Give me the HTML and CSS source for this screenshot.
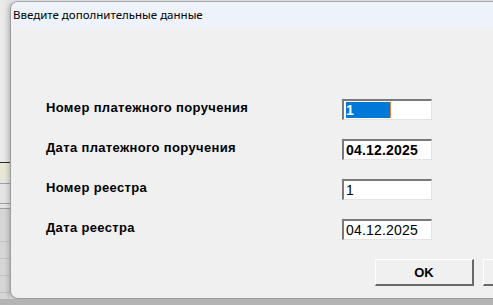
FILE: index.html
```html
<!DOCTYPE html>
<html lang="ru">
<head>
    <meta charset="UTF-8">
    <title>Введите дополнительные данные</title>
    <link rel="stylesheet" href="styles.css">
</head>
<body>
    <div class="screen">
        <div class="desk">
            <div class="behind">
                <div class="behind-top"></div>
                <div class="behind-row selected"></div>
                <div class="behind-row r1"></div>
                <div class="behind-row r2"></div>
                <div class="behind-row r3"></div>
                <div class="behind-grid">
                    <div class="grid-row"></div>
                    <div class="grid-row"></div>
                    <div class="grid-row"></div>
                    <div class="grid-row"></div>
                </div>
            </div>

            <div class="dialog">
                <div class="title-bar">Введите дополнительные данные</div>
                <div class="dialog-body">
                    <div class="form">
                        <label class="label">Номер платежного поручения</label>
                        <div class="field bold"><span class="selection">1</span><span class="caret"></span></div>

                        <label class="label">Дата платежного поручения</label>
                        <div class="field bold">04.12.2025</div>

                        <label class="label">Номер реестра</label>
                        <div class="field">1</div>

                        <label class="label">Дата реестра</label>
                        <div class="field">04.12.2025</div>
                    </div>
                    <div class="buttons">
                        <button class="btn">OK</button>
                        <button class="btn"></button>
                    </div>
                </div>
            </div>
        </div>
        <div class="taskbar"></div>
    </div>
</body>
</html>
```

FILE: styles.css
```css
html, body {
    margin: 0;
    padding: 0;
    overflow: hidden;
}

body {
    background-color: #b4b4b4;
    font-family: "Liberation Sans", Arial, sans-serif;
}

.screen {
    display: flex;
    flex-direction: column;
    width: 493px;
    height: 305px;
    overflow: hidden;
}

.desk {
    display: flex;
    height: 299px;
    background-color: #e6e6e6;
}

/* the application window behind the dialog */
.behind {
    width: 10px;
    flex-shrink: 0;
    display: flex;
    flex-direction: column;
}

.behind-top {
    height: 162px;
    background: linear-gradient(to right, #ececec, #e2e2e2);
}

.behind-row {
    background-color: #e4e4e4;
}

.behind-row.selected {
    height: 16px;
    border-top: 1px solid #2a2a2a;
    background-color: #e8e7d6;
}

.behind-row.r1 {
    height: 4px;
    border-bottom: 1px solid #a0a0a0;
}

.behind-row.r2 {
    height: 19px;
    border-bottom: 1px solid #a0a0a0;
}

.behind-row.r3 {
    height: 4px;
    border-bottom: 1px solid #a0a0a0;
}

.behind-grid {
    flex: 1;
    background-color: #d6d6d6;
    padding-top: 16px;
}

.grid-row {
    height: 16px;
    border-bottom: 1px solid #c4c4c4;
}

.dialog {
    width: 600px;
    flex-shrink: 0;
    margin-top: 1px;
    display: flex;
    flex-direction: column;
    background-color: #f0f0f0;
    border-top: 1px solid #a6a6a6;
    border-left: 1px solid #9c9c9c;
    border-bottom: 1px solid #9c9c9c;
    border-radius: 8px 0 0 8px;
    box-shadow: -2px 1px 4px rgba(0, 0, 0, 0.18);
    overflow: hidden;
}

.title-bar {
    height: 25px;
    line-height: 26px;
    padding-left: 2px;
    background-color: #eef2fa;
    color: #000;
    font-family: "Noto Sans", "Open Sans", sans-serif;
    font-size: 11.5px;
}

.dialog-body {
    flex: 1;
    padding: 72px 0 0 35px;
}

.form {
    display: grid;
    grid-template-columns: 296px 90px;
    grid-auto-rows: 21px;
    row-gap: 19px;
}

.label {
    font-size: 13px;
    font-weight: bold;
    letter-spacing: 0.35px;
    color: #000;
    line-height: 15px;
    margin-top: 1px;
}

.field {
    box-sizing: border-box;
    height: 21px;
    background-color: #fff;
    border-style: solid;
    border-width: 2px 1px 1px 2px;
    border-color: #7a7a7a #e3e3e3 #e3e3e3 #7a7a7a;
    padding: 1px 0 0 2px;
    font-size: 14px;
    line-height: 16px;
    color: #000;
    display: flex;
    align-items: flex-start;
    letter-spacing: 0.2px;
}

.field.bold {
    font-weight: bold;
}

.selection {
    display: inline-block;
    width: 44px;
    height: 16px;
    background-color: #0078d7;
    color: #fff;
}

.caret {
    display: inline-block;
    width: 1px;
    height: 16px;
    background-color: #e0883a;
}

.buttons {
    display: flex;
    gap: 9px;
    margin-top: 19px;
    padding-left: 329px;
}

.btn {
    box-sizing: border-box;
    width: 99px;
    height: 27px;
    flex-shrink: 0;
    padding: 0;
    background-color: #f0f0f0;
    border-style: solid;
    border-width: 1px 2px 2px 1px;
    border-color: #ffffff #696969 #696969 #ffffff;
    font-family: "Liberation Sans", Arial, sans-serif;
    font-size: 13px;
    font-weight: bold;
    color: #000;
}

.taskbar {
    flex: 1;
    background-color: #b4b4b4;
}
```
